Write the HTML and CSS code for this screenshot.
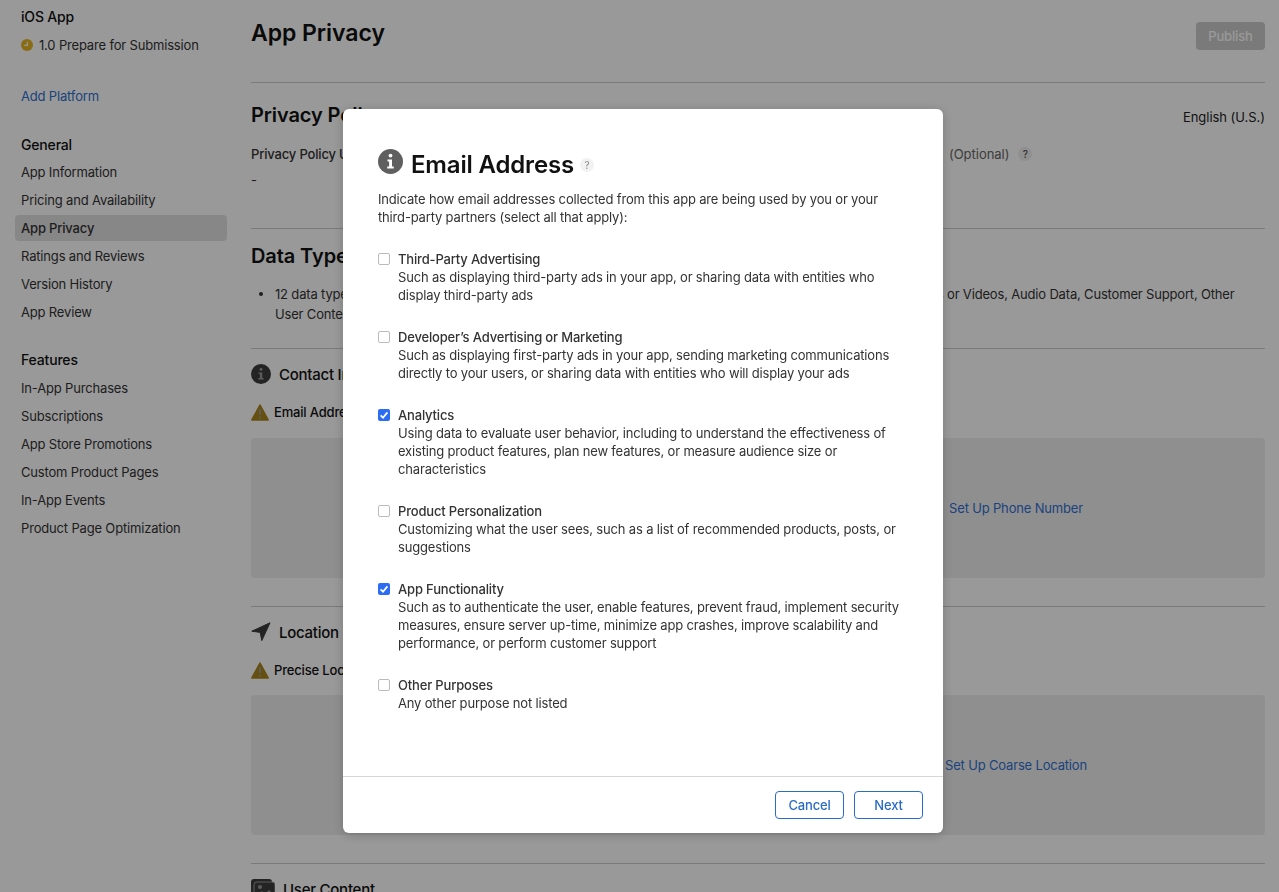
FILE: index.html
```html
<!DOCTYPE html>
<html lang="en">
<head>
<meta charset="utf-8">
<title>App Privacy</title>
<link rel="stylesheet" href="styles.css">
</head>
<body>
<div class="page">
  <aside class="sidebar">
    <div class="app-name">iOS App</div>
    <div class="status">
      <svg class="status-icon" viewBox="0 0 12 12"><circle cx="6" cy="6" r="6" fill="#e6b422"/><path d="M6.4 2.8V6.4H3.4" fill="none" stroke="#fff" stroke-width="1.1"/></svg>
      <span>1.0 Prepare for Submission</span>
    </div>
    <a class="add-platform">Add Platform</a>
    <h3 class="nav-title">General</h3>
    <ul class="nav">
      <li>App Information</li>
      <li>Pricing and Availability</li>
      <li class="active">App Privacy</li>
      <li>Ratings and Reviews</li>
      <li>Version History</li>
      <li>App Review</li>
    </ul>
    <h3 class="nav-title features">Features</h3>
    <ul class="nav nav-features">
      <li>In-App Purchases</li>
      <li>Subscriptions</li>
      <li>App Store Promotions</li>
      <li>Custom Product Pages</li>
      <li>In-App Events</li>
      <li>Product Page Optimization</li>
    </ul>
  </aside>

  <main class="main">
    <header class="head">
      <h1>App Privacy</h1>
      <button class="publish">Publish</button>
    </header>

    <section class="policy">
      <div class="policy-top">
        <h2>Privacy Policy</h2>
        <span class="lang">English (U.S.)</span>
      </div>
      <div class="policy-grid">
        <div>
          <div class="field">Privacy Policy URL</div>
          <div class="dash">-</div>
        </div>
        <div class="field choices">
          <span class="field-name">User Privacy Choices URL</span>
          <span class="optional">(Optional)</span>
          <span class="help">?</span>
        </div>
      </div>
    </section>

    <section class="types">
      <h2>Data Types</h2>
      <ul class="bullets">
        <li>12 data types collected from this app: Email Address, Phone Number, Precise Location, Coarse Location, Photos or Videos, Audio Data, Customer Support, Other User Content</li>
      </ul>
    </section>

    <section class="category">
      <div class="cat-head">
        <svg class="cat-icon" viewBox="0 0 20 20"><circle cx="10" cy="10" r="10" fill="#3d3d3d"/><circle cx="10" cy="5.2" r="1.5" fill="#999"/><path d="M7.6 8.4H11.2V14H12.6V15.6H7.4V14H8.9V10H7.6Z" fill="#999"/></svg>
        <h4>Contact Info</h4>
      </div>
      <div class="warn">
        <svg class="warn-icon" viewBox="0 0 18 16" preserveAspectRatio="none"><path d="M9 1 17.1 15H.9Z" fill="#a8851a" stroke="#a8851a" stroke-width="1.6" stroke-linejoin="round"/><rect x="8" y="4.6" width="2" height="6" rx="1" fill="#999"/><circle cx="9" cy="12.8" r="1.1" fill="#999"/></svg>
        <span>Email Address</span>
      </div>
      <div class="panel">
        <a class="panel-link">Set Up Email Address</a>
        <a class="panel-link">Set Up Phone Number</a>
      </div>
    </section>

    <section class="category">
      <div class="cat-head">
        <svg class="cat-icon" viewBox="0 0 20 20"><path d="M19 .8 10.8 18.6 9.2 10.4 .8 9.2Z" fill="#3d3d3d" stroke="#3d3d3d" stroke-linejoin="round"/></svg>
        <h4>Location</h4>
      </div>
      <div class="warn">
        <svg class="warn-icon" viewBox="0 0 18 16" preserveAspectRatio="none"><path d="M9 1 17.1 15H.9Z" fill="#a8851a" stroke="#a8851a" stroke-width="1.6" stroke-linejoin="round"/><rect x="8" y="4.6" width="2" height="6" rx="1" fill="#999"/><circle cx="9" cy="12.8" r="1.1" fill="#999"/></svg>
        <span>Precise Location</span>
      </div>
      <div class="panel">
        <a class="panel-link">Set Up Precise Location</a>
        <a class="panel-link">Set Up Coarse Location</a>
      </div>
    </section>

    <section class="category last">
      <div class="cat-head">
        <svg class="cat-icon wide" viewBox="0 0 24 20"><rect x="0" y="0" width="21" height="17" rx="3" fill="#3d3d3d"/><rect x="3" y="3" width="21" height="17" rx="3" fill="#3d3d3d" stroke="#999"/><circle cx="9" cy="8" r="2" fill="#999"/><path d="M5 18 11 12 14 15 18 11 22 15V18Z" fill="#999"/></svg>
        <h4>User Content</h4>
      </div>
    </section>
  </main>
</div>

<div class="overlay">
  <div class="modal" role="dialog">
    <div class="modal-body">
      <div class="modal-title">
        <svg class="title-icon" viewBox="0 0 20 20"><circle cx="10" cy="10" r="10" fill="#5f5f5f"/><circle cx="10" cy="5.2" r="1.5" fill="#fff"/><path d="M7.6 8.4H11.2V14H12.6V15.6H7.4V14H8.9V10H7.6Z" fill="#fff"/></svg>
        <h2>Email Address</h2>
        <span class="help light">?</span>
      </div>
      <p class="intro">Indicate how email addresses collected from this app are being used by you or your third-party partners (select all that apply):</p>

      <label class="option">
        <span class="check"></span>
        <span class="option-text"><span class="option-name">Third-Party Advertising</span>Such as displaying third-party ads in your app, or sharing data with entities who display third-party ads</span>
      </label>
      <label class="option">
        <span class="check"></span>
        <span class="option-text"><span class="option-name">Developer’s Advertising or Marketing</span>Such as displaying first-party ads in your app, sending marketing communications directly to your users, or sharing data with entities who will display your ads</span>
      </label>
      <label class="option">
        <span class="check on"><svg viewBox="0 0 12 12"><path d="M2.6 6.4 5 8.7 9.4 3.4" fill="none" stroke="#fff" stroke-width="1.8"/></svg></span>
        <span class="option-text"><span class="option-name">Analytics</span>Using data to evaluate user behavior, including to understand the effectiveness of existing product features, plan new features, or measure audience size or characteristics</span>
      </label>
      <label class="option">
        <span class="check"></span>
        <span class="option-text"><span class="option-name">Product Personalization</span>Customizing what the user sees, such as a list of recommended products, posts, or suggestions</span>
      </label>
      <label class="option">
        <span class="check on"><svg viewBox="0 0 12 12"><path d="M2.6 6.4 5 8.7 9.4 3.4" fill="none" stroke="#fff" stroke-width="1.8"/></svg></span>
        <span class="option-text"><span class="option-name">App Functionality</span>Such as to authenticate the user, enable features, prevent fraud, implement security measures, ensure server up-time, minimize app crashes, improve scalability and performance, or perform customer support</span>
      </label>
      <label class="option">
        <span class="check"></span>
        <span class="option-text"><span class="option-name">Other Purposes</span>Any other purpose not listed</span>
      </label>
    </div>
    <div class="modal-foot">
      <button class="btn">Cancel</button>
      <button class="btn">Next</button>
    </div>
  </div>
</div>
</body>
</html>
```
FILE: styles.css
```css
* { box-sizing: border-box; }
html, body { margin: 0; height: 100%; overflow: hidden; }
body {
  background: #fff;
  color: #1d1d1f;
  font-family: Inter, "Liberation Sans", sans-serif;
  font-size: 13px;
  line-height: 18px;
  letter-spacing: -0.17px;
}
h1, h2, h3, h4, p, ul { margin: 0; padding: 0; }
ul { list-style: none; }

.page { display: flex; height: 892px; overflow: hidden; }

/* Sidebar */
.sidebar { width: 251px; flex: none; padding: 8px 24px 0 15px; color: #333; }
.app-name { padding-left: 6px; font-size: 14px; font-weight: 500; color: #111; }
.status { display: flex; align-items: center; gap: 6px; margin-top: 10px; padding-left: 6px; }
.status-icon { width: 12px; height: 12px; }
.add-platform { display: block; margin-top: 33px; padding-left: 6px; color: #2f6fd0; }
.nav-title { margin-top: 31px; padding-left: 6px; font-size: 14px; line-height: 18px; font-weight: 500; color: #111; }
.nav-title.features { margin-top: 26px; }
.nav { margin-top: 5px; }
.nav-features { margin-top: 6px; }
.nav li { height: 26px; line-height: 26px; margin-bottom: 2px; padding-left: 6px; border-radius: 4px; }
.nav li.active { background: #e1e1e1; font-weight: 500; }

/* Main */
.main { flex: 1; padding-right: 14px; min-width: 0; }
.head { display: flex; justify-content: space-between; align-items: flex-start; height: 83px; padding-top: 22px; border-bottom: 1px solid #ccc; }
h1 { font-size: 23px; line-height: 22px; font-weight: 600; color: #111; letter-spacing: -0.05px; }
.publish { width: 69px; height: 28px; border: 0; border-radius: 4px; background: #ccc; color: #fff; font: 500 13px Inter, sans-serif; letter-spacing: -0.17px; }
.policy { height: 146px; border-bottom: 1px solid #ccc; padding-top: 21px; }
h2 { font-size: 20px; line-height: 22px; font-weight: 600; color: #111; letter-spacing: -0.1px; }
.policy-top { display: flex; justify-content: space-between; align-items: center; }
.lang { position: relative; top: 2px; color: #222; letter-spacing: -0.03px; }
.policy-grid { display: grid; grid-template-columns: 516px 1fr; margin-top: 19px; }
.field { font-weight: 500; color: #333; }
.choices { display: flex; align-items: flex-start; }
.field-name { width: 182px; flex: none; }
.optional { font-weight: 400; color: #666; letter-spacing: -0.03px; }
.dash { margin-top: 8px; color: #333; }
.help { display: inline-flex; align-items: center; justify-content: center; width: 14px; height: 14px; margin: 2px 0 0 9px; border-radius: 50%; background: #eee; font-size: 10px; line-height: 14px; color: #555; }
.types { height: 120px; border-bottom: 1px solid #ccc; padding-top: 16px; }
.bullets { margin-top: 17px; padding-left: 24px; }
.bullets li { position: relative; line-height: 20px; color: #333; }
.bullets li::before { content: ""; position: absolute; left: -16px; top: 8px; width: 4px; height: 4px; border-radius: 50%; background: #333; }

.category { height: 258px; border-bottom: 1px solid #ccc; padding-top: 15px; }
.category + .category { height: 257px; }
.category.last { border: 0; }
.cat-head { display: flex; align-items: center; gap: 8px; height: 20px; }
.cat-icon { width: 20px; height: 20px; flex: none; }
.cat-icon.wide { width: 24px; }
h4 { margin-top: 2px; font-size: 15px; line-height: 20px; font-weight: 500; color: #111; letter-spacing: -0.25px; }
.warn { display: flex; align-items: center; gap: 5px; height: 18px; margin-top: 19px; font-weight: 500; color: #111; }
.warn-icon { width: 18px; height: 17px; flex: none; }
.panel { display: grid; grid-template-columns: 516px 1fr; align-items: center; height: 140px; margin-top: 17px; border-radius: 4px; background: #efefef; text-align: center; }
.category + .category .panel { margin-top: 16px; }
.panel-link { color: #2f6fd0; }

/* Overlay + modal */
.overlay { position: fixed; inset: 0; background: rgba(0, 0, 0, .4); padding: 109px 0 0 343px; }
.modal { display: flex; flex-direction: column; width: 600px; height: 724px; border-radius: 6px; background: #fff; box-shadow: 0 2px 12px rgba(0, 0, 0, .2); }
.modal-body { flex: 1; padding: 40px 35px 0; }
.modal-title { display: flex; align-items: center; height: 25px; }
.title-icon { width: 25px; height: 25px; flex: none; }
.modal-title h2 { margin-left: 8px; position: relative; top: 3px; font-size: 24px; line-height: 26px; letter-spacing: -0.17px; }
.help.light { position: relative; top: 3px; margin: 0 0 0 6px; background: #f2f2f2; color: #888; }
.intro { margin-top: 16px; color: #333; width: 520px; }
.option { display: flex; gap: 8px; margin-top: 24px; color: #333; }
.check { display: flex; width: 12px; height: 12px; margin-top: 3px; flex: none; border: 1px solid #bbb; border-radius: 2px; background: #fff; }
.check.on { border: 0; background: #2a6df4; }
.check svg { width: 12px; height: 12px; }
.option-text { display: block; width: 505px; }
.option-name { display: block; font-weight: 500; }
.modal-foot { display: flex; justify-content: flex-end; gap: 10px; height: 57px; padding: 14px 20px 0 0; border-top: 1px solid #d6d6d6; }
.btn { width: 69px; height: 28px; border: 1px solid #2a6cc7; border-radius: 4px; background: #fff; color: #2a6cc7; font: 500 13px Inter, sans-serif; letter-spacing: -0.17px; }
```
